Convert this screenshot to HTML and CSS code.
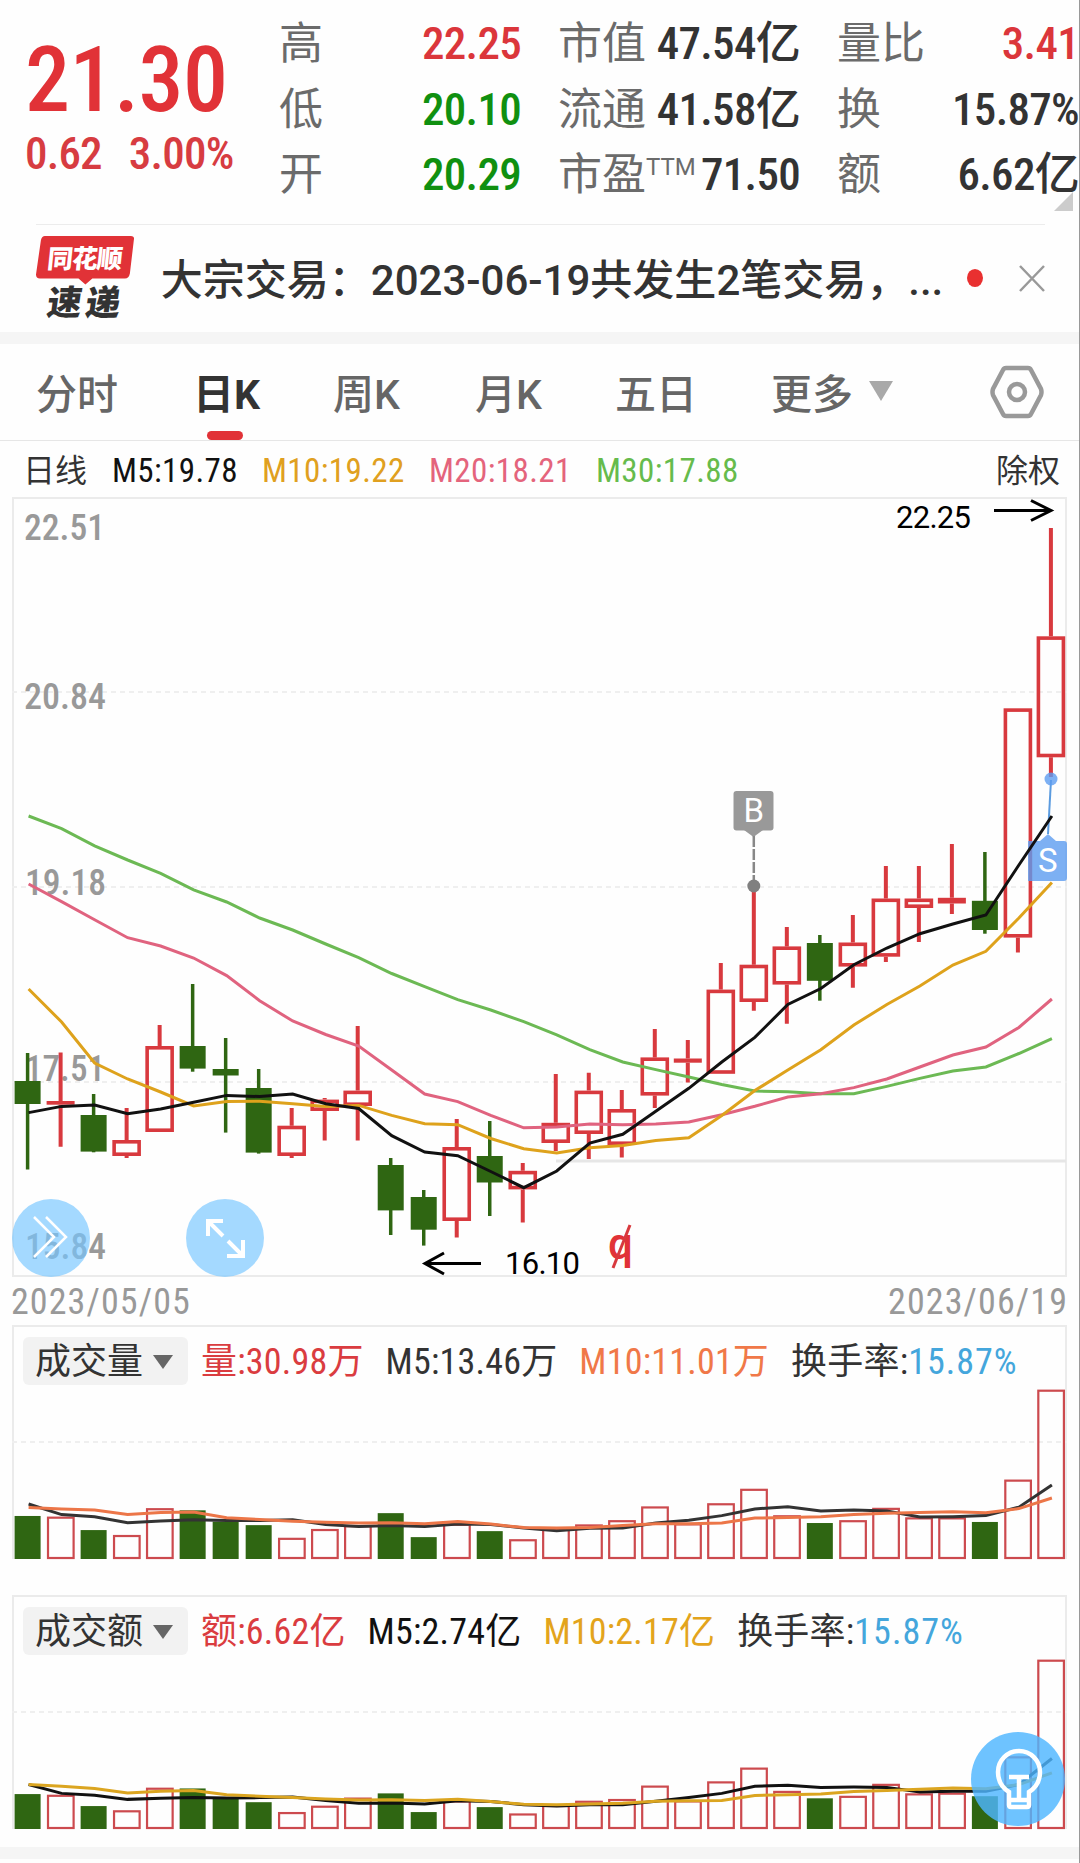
FILE: index.html
```
<!DOCTYPE html>
<html lang="zh-CN">
<head>
  <meta charset="utf-8">
  <title>日K</title>
  <meta name="viewport" content="width=device-width, initial-scale=1.0">
  <link rel="stylesheet" href="styles.css">
</head>
<body>
  <div class="page">
    <header class="quote">
      <div class="price">
        <div class="price-now">21.30</div>
        <div class="price-change"><span>0.62</span><span>3.00%</span></div>
      </div>
      <dl class="stats">
        <div><dt>高</dt><dd class="up">22.25</dd></div>
        <div><dt>低</dt><dd class="down">20.10</dd></div>
        <div><dt>开</dt><dd class="down">20.29</dd></div>
      </dl>
      <dl class="stats">
        <div><dt>市值</dt><dd>47.54亿</dd></div>
        <div><dt>流通</dt><dd>41.58亿</dd></div>
        <div><dt>市盈<sup>TTM</sup></dt><dd>71.50</dd></div>
      </dl>
      <dl class="stats">
        <div><dt>量比</dt><dd class="up">3.41</dd></div>
        <div><dt>换</dt><dd>15.87%</dd></div>
        <div><dt>额</dt><dd>6.62亿</dd></div>
      </dl>
      <span class="corner"></span>
    </header>

    <section class="news">
      <svg class="news-logo" viewBox="0 0 100 86">
        <path fill="#e13237" d="M9 0H96Q100 0 99 4L95 38Q94 43 90 43H57L50 49L43 43H4Q0 43 0 39L5 4Q6 0 9 0Z"/>
        <text class="logo-top" x="14" y="32" textLength="76" transform="skewX(-6)">同花顺</text>
        <text class="logo-bottom" x="21" y="80" textLength="74" transform="skewX(-8)">速递</text>
      </svg>
      <p class="news-text">大宗交易：<b>2023-06-19</b>共发生<b>2</b>笔交易，<b>...</b></p>
      <span class="news-dot"></span>
      <svg class="news-close" viewBox="0 0 26 28"><path d="M1 2L25 27M25 2L1 27"/></svg>
    </section>

    <nav class="tabs">
      <a>分时</a>
      <a class="active">日K</a>
      <a>周K</a>
      <a>月K</a>
      <a>五日</a>
      <a class="more">更多<i></i></a>
      <svg class="settings" viewBox="0 0 54 54">
        <path d="M16 3H38Q40 3 41 5L51 24Q52 27 51 30L41 49Q40 51 38 51H16Q14 51 13 49L3 30Q2 27 3 24L13 5Q14 3 16 3Z"/>
        <circle cx="27" cy="27" r="8"/>
      </svg>
    </nav>

    <div class="legend">
      <span class="name">日线</span>
      <span class="m5">M5:19.78</span>
      <span class="m10">M10:19.22</span>
      <span class="m20">M20:18.21</span>
      <span class="m30">M30:17.88</span>
      <span class="right">除权</span>
    </div>

    <div class="kline">
      <svg id="kline" viewBox="12 497 1055 780"></svg>
      <span class="round expand-left">
        <svg viewBox="0 0 78 78"><path d="M22 18L42 38L22 58M34 18L54 38L34 58" stroke-width="2.5"/></svg>
      </span>
      <span class="round fullscreen">
        <svg viewBox="0 0 78 78"><path d="M37 22H22V37M22 22L37 37M42 42L57 57M57 41V57H41" stroke-width="4"/></svg>
      </span>
    </div>
    <div class="dates"><span>2023/05/05</span><span>2023/06/19</span></div>

    <section class="panel">
      <div class="panel-head">
        <span class="select">成交量<i></i></span>
        <span class="red">量:30.98万</span>
        <span class="dark">M5:13.46万</span>
        <span class="orange">M10:11.01万</span>
        <span class="dark">换手率:<em>15.87%</em></span>
      </div>
      <svg id="volume" viewBox="12 1325 1055 235"></svg>
    </section>

    <section class="panel amount">
      <div class="panel-head">
        <span class="select">成交额<i></i></span>
        <span class="red">额:6.62亿</span>
        <span class="black">M5:2.74亿</span>
        <span class="gold">M10:2.17亿</span>
        <span class="dark">换手率:<em>15.87%</em></span>
      </div>
      <svg id="amount" viewBox="12 1595 1055 235"></svg>
      <span class="bulb">
        <svg viewBox="0 0 94 94"><path d="M38 73V60Q27 53 27 40A21 21 0 0 1 69 40Q69 53 58 60V73Q58 75 56 75H40Q38 75 38 73ZM38 45H58M48 45V68M40 68H57"/></svg>
      </span>
    </section>
    <footer class="bottom"></footer>
  </div>
  <script src="chart.js"></script>
</body>
</html>
```

FILE: styles.css
```
* {
  box-sizing: border-box;
}
body {
  margin: 0;
  background: #fefefe;
  color: #333;
  font-family: Roboto, "Noto Sans CJK SC", sans-serif;
}
.page {
  width: 1080px;
  height: 1863px;
  overflow: hidden;
  border-right: 1px solid #999;
}
svg {
  display: block;
  overflow: visible;
}
dl, dd, p {
  margin: 0;
}

/* quote header */
.quote {
  position: relative;
  display: grid;
  grid-template-columns: 217px 242px 242px 242px;
  column-gap: 37px;
  height: 224px;
  padding-left: 25px;
}
.stats {
  margin-top: 12px;
}
.stats div {
  display: flex;
  justify-content: space-between;
  height: 65.5px;
  line-height: 65px;
  white-space: nowrap;
}
.stats dt {
  font-size: 44px;
  color: #6b6b6b;
}
.stats dd {
  font-size: 45px;
  font-weight: 500;
  font-stretch: 87.5%;
  letter-spacing: -.7px;
  line-height: 64px;
}
.stats sup {
  font-size: 24px;
  line-height: 0;
  vertical-align: 15px;
}
.price {
  color: #e13237;
  font-weight: 500;
  font-stretch: 87.5%;
  white-space: nowrap;
}
.price-now {
  height: 114px;
  padding-top: 28px;
  font-size: 90px;
  line-height: 106px;
  letter-spacing: -.5px;
}
.price-change {
  display: flex;
  gap: 27px;
  padding-top: 13px;
  font-size: 45px;
  letter-spacing: -.8px;
  line-height: 54px;
  color: #d73c41;
}
.up {
  color: #db363b;
}
.down {
  color: #109010;
}
.corner {
  position: absolute;
  left: 1054px;
  top: 192px;
  border-left: 19px solid transparent;
  border-bottom: 19px solid #ccc;
}

/* news strip */
.news {
  display: flex;
  align-items: center;
  height: 108px;
  margin: 0 34px 0 36px;
  border-top: 1px solid #ececec;
}
.news-logo {
  width: 99px;
  height: 85px;
  margin-top: -1px;
}
.logo-top {
  font: 900 26px "Noto Sans CJK SC", sans-serif;
  fill: #fff;
}
.logo-bottom {
  font: 900 35px "Noto Sans CJK SC", sans-serif;
  fill: #333;
}
.news-text {
  width: 782px;
  margin: -4px 0 0 26px;
  font-size: 42px;
  font-weight: 500;
  white-space: nowrap;
}
.news-text b {
  font-weight: 500;
}
.news-dot {
  width: 18px;
  height: 18px;
  margin: -2px 0 0 24px;
  border-radius: 50%;
  background: #e93030;
}
.news-close {
  width: 26px;
  height: 28px;
  margin: -2px 0 0 36px;
  fill: none;
  stroke: #999;
  stroke-width: 2.5;
}

/* period tabs */
.tabs {
  display: flex;
  align-items: center;
  height: 109px;
  border-top: 12px solid #f5f5f5;
  border-bottom: 1px solid #e6e6e6;
  font-size: 41px;
  font-weight: 500;
  color: #666;
  white-space: nowrap;
}
.tabs a {
  position: relative;
  width: 145px;
  padding-left: 36px;
  margin-top: -3px;
}
.tabs .active {
  color: #333;
  font-weight: 700;
}
.tabs a:nth-child(2) {
  width: 152px;
  padding-left: 48px;
}
.tabs .active::after {
  content: "";
  position: absolute;
  left: 62px;
  bottom: -19px;
  width: 36px;
  height: 9px;
  border-radius: 5px;
  background: #e13237;
}
.tabs a:nth-child(3) {
  width: 142px;
}
.tabs a:nth-child(4) {
  width: 140px;
}
.tabs a:nth-child(5) {
  width: 156px;
}
.tabs .more {
  display: flex;
  align-items: center;
  width: 219px;
}
.more i {
  margin-left: 16px;
  border: 12.5px solid transparent;
  border-top: 20px solid #a9a9a9;
  border-bottom: 0;
}
.settings {
  width: 54px;
  height: 54px;
  margin-left: 36px;
  fill: none;
  stroke: #999;
  stroke-width: 4.5;
}

.legend {
  display: flex;
  height: 56px;
  padding: 0 19px 0 23px;
  font-size: 33px;
  line-height: 60px;
  font-stretch: 87.5%;
  letter-spacing: .4px;
  white-space: nowrap;
}
.legend .name, .legend .right {
  font-size: 32px;
  letter-spacing: 0;
}
.legend .name {
  width: 89px;
}
.m5 {
  width: 150px;
  color: #111;
}
.m10 {
  width: 167px;
  color: #e0a020;
}
.m20 {
  width: 167px;
  color: #e4647c;
}
.m30 {
  color: #66bb4c;
}
.legend .right {
  margin-left: auto;
}

/* candles */
.kline {
  position: relative;
  width: 1055px;
  height: 780px;
  margin-left: 12px;
}
#kline {
  width: 1055px;
  height: 780px;
}
.axis {
  font-size: 36px;
  font-stretch: 87.5%;
  font-weight: 500;
  fill: #999;
}
.mark {
  font-size: 31px;
  fill: #000;
}
.badge {
  font-size: 33px;
  fill: #fff;
}
.ex {
  font-size: 44px;
  font-weight: 500;
  fill: #e13237;
}
.round {
  position: absolute;
  top: 702px;
  width: 78px;
  height: 78px;
  border-radius: 50%;
  background: rgba(119, 198, 255, .67);
}
.round svg, .bulb svg {
  fill: none;
  stroke: #fff;
}
.expand-left {
  left: 0;
}
.fullscreen {
  left: 174px;
}
.dates {
  display: flex;
  justify-content: space-between;
  height: 48px;
  padding: 0 11px;
  font-size: 36px;
  font-stretch: 87.5%;
  letter-spacing: 1.1px;
  line-height: 51px;
  color: #999;
}

/* volume and turnover panels */
.panel {
  position: relative;
  width: 1055px;
  height: 235px;
  margin-left: 12px;
}
.panel > svg {
  width: 1055px;
  height: 235px;
}
.amount {
  margin-top: 35px;
}
.panel-head {
  position: absolute;
  left: 11px;
  top: 12px;
  display: flex;
  font-size: 36px;
  line-height: 51px;
  white-space: nowrap;
  font-stretch: 87.5%;
  letter-spacing: .2px;
}
.panel-head span {
  margin-right: 22px;
}
.panel-head .select {
  display: flex;
  align-items: center;
  width: 165px;
  height: 48px;
  margin-right: 13px;
  padding: 2px 0 0 12px;
  border-radius: 6px;
  background: #f2f2f2;
  letter-spacing: 0;
}
.select i {
  margin-left: 10px;
  border: 10px solid transparent;
  border-top: 14px solid #666;
  border-bottom: 0;
}
.red {
  color: #da3c40;
}
.dark {
  color: #333;
}
.black {
  color: #111;
}
.orange {
  color: #f07848;
}
.gold {
  color: #e3a41c;
}
.panel-head em {
  font-style: normal;
  letter-spacing: 1px;
  color: #44a6dc;
}
.bulb {
  position: absolute;
  left: 959px;
  top: 137px;
  width: 94px;
  height: 94px;
  border-radius: 50%;
  background: rgba(78, 182, 255, .82);
}
.bulb svg {
  stroke-width: 4.5;
}
.bottom {
  height: 12px;
  margin-top: 17px;
  background: #f5f5f5;
}
```

FILE: chart.js
```
const RED = '#d8393e';
const GREEN = '#2f6612';
const STEP = 33.01;
const cx = i => 27.6 + i * STEP;

// high, body top, body bottom, low
const candles = [
  [1053, 1081, 1104, 1169.5], [1052.5, 1101, 1104.7, 1146.7], [1094, 1115, 1151.6, 1152.3], [1108, 1140, 1156, 1158],
  [1025, 1046, 1132, 1132], [984, 1046, 1068.6, 1071.7], [1038, 1069, 1075.5, 1132.6], [1069, 1088, 1152.6, 1153.6],
  [1108, 1125.7, 1156, 1158], [1098, 1099.6, 1111, 1140.5], [1026, 1090.6, 1106, 1140.5], [1158, 1165, 1210.4, 1235],
  [1190, 1197, 1229.7, 1245.6], [1119, 1147, 1221, 1237.6], [1121, 1156, 1182.5, 1216], [1163, 1170.8, 1189.4, 1222.5],
  [1074, 1122.8, 1143, 1151], [1072.7, 1090.6, 1134, 1159], [1090, 1109, 1145, 1157.6], [1029, 1057.4, 1095.6, 1108],
  [1040, 1058.5, 1062.7, 1082.6], [963, 989.6, 1073.8, 1073.8], [887, 964.7, 1002, 1010.7], [927, 946.4, 984.6, 1023.7],
  [935, 943, 980.8, 1000.7], [915, 942.5, 966.6, 987.7], [866, 898.5, 956.7, 962], [866, 898.5, 908, 942],
  [844, 897.8, 903.5, 914], [852, 900.8, 930, 933.7], [708.3, 708.3, 937.6, 952.5], [528, 636.3, 757.3, 777]
];
const falling = [0, 2, 5, 6, 7, 11, 12, 14, 24, 29];

const ma30 = [816, 828.6, 845.8, 860, 873.3, 889.8, 902, 918, 930, 944, 957.7, 973.5, 986.6, 999.7, 1010, 1021.7, 1034.8, 1049.7, 1062, 1069.6, 1077, 1084.5, 1091, 1091.8, 1093.7, 1093.7, 1086.4, 1078.4, 1071, 1067, 1053.5, 1038.6];
const ma20 = [884, 901.6, 919.8, 937.7, 946, 958, 975.6, 1000.7, 1021, 1034.5, 1046, 1070, 1094, 1101.6, 1115.4, 1127.8, 1127, 1124, 1124.7, 1124, 1122, 1114.8, 1106.3, 1097, 1093.7, 1087.6, 1079, 1067, 1055, 1047, 1027.5, 999];
const ma10 = [989, 1022, 1063, 1079, 1092, 1106, 1101.6, 1101.3, 1103.7, 1106.4, 1105.4, 1115.4, 1123.7, 1124.7, 1138.5, 1148.8, 1153, 1147.7, 1145.4, 1140.4, 1137.7, 1115.5, 1090.6, 1070, 1049.7, 1025, 1004.5, 986, 965, 951.3, 918, 882.5];
const ma5 = [1112.6, 1106.4, 1105, 1113.7, 1109, 1102.3, 1095.4, 1096.5, 1094, 1103.7, 1108.5, 1135.7, 1152, 1155.7, 1171.5, 1187.7, 1171, 1143, 1134.3, 1111.3, 1088.3, 1062, 1037.4, 1004.5, 988.5, 964.7, 948, 933.7, 924, 915, 865, 816];

const line = (ys, color, w) =>
  `<polyline points="${ys.map((y, i) => cx(i) + 1 + ',' + y).join(' ')}" fill="none" stroke="${color}" stroke-width="${w}"/>`;
const grid = y =>
  `<line x1="12" x2="1067" y1="${y}" y2="${y}" stroke="#efefef" stroke-width="2" stroke-dasharray="5 4"/>`;

function candle([high, top, bottom, low], i) {
  const x = cx(i);
  if (falling.includes(i)) {
    return `<path d="M${x} ${high}V${low}" stroke="${GREEN}" stroke-width="3.5"/>` +
      `<rect x="${x - 13}" y="${top}" width="26" height="${bottom - top}" fill="${GREEN}"/>`;
  }
  const wicks = `<path d="M${x} ${high}V${top}M${x} ${bottom}V${low}" stroke="${RED}" stroke-width="4"/>`;
  if (bottom - top < 7) {
    return wicks + `<rect x="${x - 14}" y="${top}" width="28" height="${bottom - top}" fill="${RED}"/>`;
  }
  return wicks + `<rect x="${x - 12.5}" y="${top + 1.8}" width="25" height="${bottom - top - 3.6}" fill="none" stroke="${RED}" stroke-width="3.6"/>`;
}

document.getElementById('kline').innerHTML = `
  <path d="M13 1276V498H1066V1276Z" fill="none" stroke="#ebebeb" stroke-width="2"/>
  ${grid(692)}${grid(887)}${grid(1082)}
  <path d="M556 1161H1066" stroke="#e6e6e6" stroke-width="3"/>
  <g class="axis">
    <text x="24" y="540" textLength="81" lengthAdjust="spacingAndGlyphs">22.51</text>
    <text x="24" y="709" textLength="82" lengthAdjust="spacingAndGlyphs">20.84</text>
    <text x="25" y="895" textLength="81" lengthAdjust="spacingAndGlyphs">19.18</text>
    <text x="25" y="1081" textLength="80" lengthAdjust="spacingAndGlyphs">17.51</text>
    <text x="25" y="1259" textLength="81" lengthAdjust="spacingAndGlyphs">15.84</text>
  </g>
  ${candles.map(candle).join('')}
  <g fill="#999" stroke="#888">
    <rect x="733.5" y="791" width="40" height="39.5" rx="3" stroke="none"/>
    <path d="M744 830H763L753.5 837Z" stroke="none"/>
    <path d="M753.8 836V882" stroke-width="2.5" stroke-dasharray="11 2"/>
    <circle cx="753.8" cy="886" r="6.5" fill="#808080" stroke="none"/>
  </g>
  <text class="badge" x="743.5" y="822">B</text>
  <g fill="#5c9cf0">
    <path d="M1051 780L1048 834" stroke="#5b9bdf" stroke-width="2"/>
    <circle cx="1051" cy="779" r="6.5" fill-opacity=".8"/>
    <path d="M1028 841H1040L1048 834L1056 841H1064Q1067 841 1067 844V878Q1067 881 1064 881H1028Z" fill-opacity=".8"/>
  </g>
  <text class="badge" x="1038" y="872">S</text>
  ${line(ma30, '#6cb954', 3)}${line(ma20, '#e0637f', 3)}${line(ma10, '#dea21c', 3)}${line(ma5, '#111', 3)}
  <path d="M994 510.5H1051M1031 500.5L1051 510.5L1031 520.5" fill="none" stroke="#000" stroke-width="3"/>
  <text class="mark" x="896" y="528" textLength="75">22.25</text>
  <path d="M481 1263.5H425M444 1253L425 1263.5L444 1274" fill="none" stroke="#000" stroke-width="3"/>
  <text class="mark" x="505" y="1274" textLength="75">16.10</text>
  <text class="ex" x="608" y="1259">q</text>
  <path d="M613 1268L630 1225" stroke="${RED}" stroke-width="3"/>`;

// Bar tops and averages share one scale; base is the zero line
function bars(id, frameTop, base, tops, m5, m10, c5, c10) {
  const bottom = frameTop + 234;
  const y = v => bottom - (base - v) * 0.3527;
  const rects = tops.map((v, i) => {
    const x = cx(i);
    const h = bottom - y(v);
    return falling.includes(i)
      ? `<rect x="${x - 13}" y="${y(v)}" width="26" height="${h}" fill="${GREEN}"/>`
      : `<rect x="${x - 12.6}" y="${y(v) + 1}" width="25.6" height="${h - 2}" fill="none" stroke="#cc4a4e" stroke-width="2.2"/>`;
  }).join('');
  document.getElementById(id).innerHTML = `
    <path d="M13 ${bottom}V${frameTop + 1}H1066V${bottom}" fill="none" stroke="#ebebeb" stroke-width="2"/>
    ${grid(frameTop + 117)}${rects}
    ${line(m5.map(y), c5, 3)}${line(m10.map(y), c10, 3)}`;
}

bars('volume', 1325, 706,
  [584, 586, 624, 638, 562, 568, 600, 610, 646, 621, 610, 576, 644, 606, 627, 650, 620, 608, 596, 557, 605, 548, 507, 582, 604, 596, 561, 588, 588, 601, 481, 226],
  [550, 580, 586, 603, 598, 595, 597, 597, 595, 608, 614, 611, 614, 607, 608, 618, 626, 619, 618, 604, 596, 583, 564, 558, 570, 567, 570, 587, 586, 583, 559, 496],
  [560, 564, 567, 580, 574, 573, 589, 594, 599, 602, 604, 603, 606, 600, 607, 617, 618, 617, 611, 606, 606, 604, 590, 588, 586, 580, 576, 574, 572, 575, 563, 533],
  '#333', '#ec7648');

bars('amount', 1595, 1471,
  [1372, 1374, 1406, 1418, 1354, 1356, 1385, 1395, 1423, 1405, 1382, 1370, 1423, 1390, 1409, 1427, 1403, 1391, 1386, 1348, 1390, 1336, 1297, 1363, 1384, 1377, 1343, 1370, 1368, 1378, 1265, 991],
  [1345, 1370, 1375, 1387, 1384, 1382, 1383, 1382, 1380, 1390, 1398, 1397, 1400, 1391, 1393, 1402, 1406, 1402, 1402, 1392, 1382, 1370, 1350, 1347, 1353, 1352, 1353, 1366, 1364, 1364, 1345, 1271],
  [1345, 1350, 1356, 1369, 1364, 1362, 1374, 1378, 1382, 1386, 1389, 1388, 1390, 1387, 1393, 1401, 1402, 1400, 1398, 1392, 1391, 1390, 1376, 1374, 1372, 1365, 1362, 1358, 1355, 1357, 1345, 1312],
  '#111', '#dba520');
```
